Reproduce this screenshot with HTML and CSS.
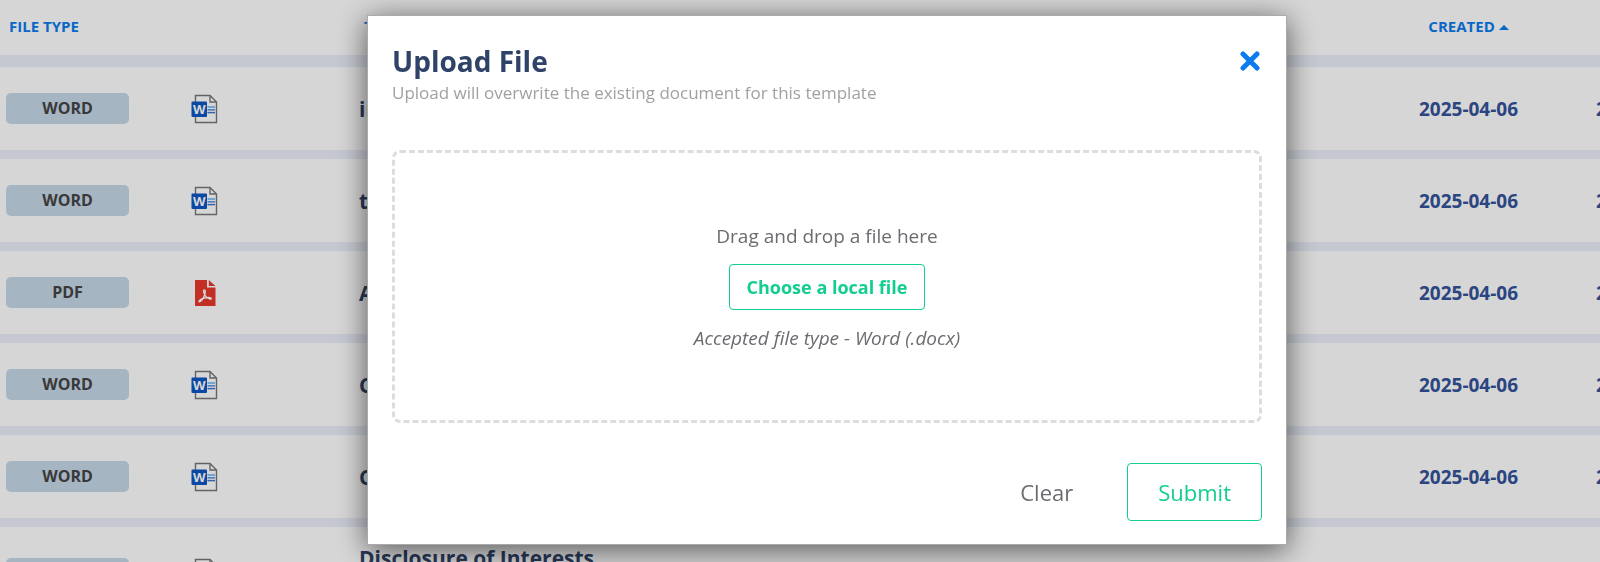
FILE: index.html
```html
<!DOCTYPE html>
<html lang="en">
<head>
    <meta charset="UTF-8">
    <meta name="viewport" content="width=device-width, initial-scale=1.0">
    <title>Upload File</title>
    <link rel="stylesheet" href="styles.css">
</head>
<body>
    <!-- Shared icons -->
    <svg class="icon-defs" aria-hidden="true">
        <symbol id="icon-word" viewBox="0 0 27 30">
            <path d="M4.500 1.500H19L25.500 8V28.500H4.500Z" fill="#fff" stroke="#777" stroke-width="1.4"/>
            <path d="M19 1.500V8H25.500" fill="none" stroke="#777" stroke-width="1.4"/>
            <path d="M16.500 13H24" stroke="#5eb5f5" stroke-width="1.5"/>
            <path d="M16.500 15.800H24" stroke="#4a93dc" stroke-width="1.5"/>
            <path d="M16.500 18.600H24" stroke="#3a78c8" stroke-width="1.5"/>
            <rect x="0.500" y="7.500" width="15.500" height="15.500" rx="1" fill="#0c56c4"/>
            <text x="8.200" y="19.600" text-anchor="middle" class="icon-letter">W</text>
        </symbol>
        <symbol id="icon-pdf" viewBox="0 0 27 30">
            <path d="M4 2H16V9.500H24.500V28H4Z" fill="#e8382c"/>
            <path d="M17.800 2L24.500 8H17.800Z" fill="#e8382c"/>
            <path d="M13 12C14.500 11.500 14.500 14 13.800 16.500C12.500 20 10.500 23.500 8.500 23.800C7.200 23.600 9 21.200 12.500 20.300C16 19.300 20 19 20.300 20.500C20.200 22 16 20.500 14.200 17.500C12.800 15 12.300 12.500 13 12Z" fill="none" stroke="#fff" stroke-width="1.400"/>
        </symbol>
    </svg>

    <div class="table-wrap">
        <table class="template-table">
            <colgroup>
                <col class="col-type">
                <col class="col-icon">
                <col>
                <col class="col-date">
                <col class="col-date">
            </colgroup>
            <thead>
                <tr>
                    <th class="type-head">File Type</th>
                    <th></th>
                    <th class="name-head">Template</th>
                    <th>Created <span class="sort-arrow"></span></th>
                    <th>Updated</th>
                </tr>
            </thead>
            <tbody>
                <tr>
                    <td><span class="badge">WORD</span></td>
                    <td><svg class="file-icon"><use href="#icon-word"/></svg></td>
                    <td class="name">interests</td>
                    <td class="date">2025-04-06</td>
                    <td class="date">2025-04-06</td>
                </tr>
                <tr>
                    <td><span class="badge">WORD</span></td>
                    <td><svg class="file-icon"><use href="#icon-word"/></svg></td>
                    <td class="name">template</td>
                    <td class="date">2025-04-06</td>
                    <td class="date">2025-04-06</td>
                </tr>
                <tr>
                    <td><span class="badge">PDF</span></td>
                    <td><svg class="file-icon"><use href="#icon-pdf"/></svg></td>
                    <td class="name">Agreement</td>
                    <td class="date">2025-04-06</td>
                    <td class="date">2025-04-06</td>
                </tr>
                <tr>
                    <td><span class="badge">WORD</span></td>
                    <td><svg class="file-icon"><use href="#icon-word"/></svg></td>
                    <td class="name">Contract</td>
                    <td class="date">2025-04-06</td>
                    <td class="date">2025-04-06</td>
                </tr>
                <tr>
                    <td><span class="badge">WORD</span></td>
                    <td><svg class="file-icon"><use href="#icon-word"/></svg></td>
                    <td class="name">Certificate</td>
                    <td class="date">2025-04-06</td>
                    <td class="date">2025-04-06</td>
                </tr>
                <tr>
                    <td><span class="badge">WORD</span></td>
                    <td><svg class="file-icon"><use href="#icon-word"/></svg></td>
                    <td class="name">Disclosure of Interests<br>Form</td>
                    <td class="date">2025-04-06</td>
                    <td class="date">2025-04-06</td>
                </tr>
            </tbody>
        </table>
    </div>

    <div class="overlay">
        <div class="modal" role="dialog" aria-modal="true" aria-labelledby="modalTitle">
            <div class="modal-header">
                <div>
                    <h2 id="modalTitle">Upload File</h2>
                    <p class="subtitle">Upload will overwrite the existing document for this template</p>
                </div>
                <button type="button" class="close-button" aria-label="Close">
                    <svg viewBox="0 0 20 20" width="20" height="20"><path d="M3 3L17 17M17 3L3 17" stroke="currentColor" stroke-width="5" stroke-linecap="round"/></svg>
                </button>
            </div>

            <div class="drop-zone">
                <p>Drag and drop a file here</p>
                <button type="button" class="choose-button">Choose a local file</button>
                <p class="accepted">Accepted file type - Word (.docx)</p>
            </div>

            <div class="modal-footer">
                <button type="button" class="clear-button">Clear</button>
                <button type="button" class="submit-button">Submit</button>
            </div>
        </div>
    </div>
</body>
</html>
```

FILE: styles.css
```css
:root {
    --blue: #0b7bee;
    --navy: #2f4369;
    --green: #13ce8f;
    --text-grey: #6b6c70;
    --divider: #ebeff9;
}

* {
    box-sizing: border-box;
}

body {
    margin: 0;
    height: 100vh;
    overflow: hidden;
    font-family: 'Open Sans', sans-serif;
    background: #fff;
}

button {
    font-family: inherit;
    background: none;
    border: none;
    padding: 0;
    cursor: pointer;
}

.icon-defs {
    display: none;
}

.icon-letter {
    font-family: 'Open Sans', sans-serif;
    font-size: 13px;
    font-weight: 700;
    fill: #fff;
}

/* Template list */
.table-wrap {
    height: 100%;
    overflow: hidden;
}

.template-table {
    width: calc(100% + 134px); /* last column runs past the edge */
    table-layout: fixed;
    border-spacing: 0;
    text-align: center;
}

.col-type {
    width: 135px;
}

.col-icon {
    width: 138px;
}

.col-date {
    width: 177px;
}

.template-table th {
    height: 67px;
    padding: 0 0 3px;
    border-bottom: 12px solid var(--divider);
    color: var(--blue);
    font-size: 15px;
    font-weight: 700;
    text-transform: uppercase;
}

.template-table td {
    height: 92px;
    padding: 0 6px;
    border-bottom: 9px solid var(--divider);
}

.template-table .type-head {
    padding-left: 9px;
    text-align: left;
}

.template-table .name-head {
    padding-left: 91px;
    text-align: left;
}

.template-table .name {
    padding: 16px 0 16px 86px;
    color: var(--navy);
    font-size: 21px;
    line-height: 30px;
    font-weight: 700;
    text-align: left;
}

.template-table .date {
    color: #34539a;
    font-size: 19px;
    font-weight: 700;
}

.sort-arrow {
    display: inline-block;
    border: 5px solid transparent;
    border-top: none;
    border-bottom-color: var(--blue);
    vertical-align: middle;
}

.badge {
    display: block;
    border-radius: 5px;
    background: #c5d8e8;
    color: #444;
    font-size: 16px;
    line-height: 31px;
    font-weight: 700;
}

.file-icon {
    display: block;
    width: 27px;
    height: 30px;
    margin: 0 auto;
}

/* Modal */
.overlay {
    position: fixed;
    inset: 0;
    padding: 15px 313px 0 367px;
    background: rgba(0, 0, 0, 0.16);
}

.modal {
    padding: 25px 24px 23px;
    border: 1px solid #aaa;
    background: #fff;
    box-shadow: 0 5px 28px rgba(0, 0, 0, 0.6);
}

.modal-header {
    display: flex;
    justify-content: space-between;
    align-items: flex-start;
    margin-bottom: 46px;
}

h2 {
    margin: 0;
    color: var(--navy);
    font-size: 28px;
    line-height: 41px;
    font-weight: 700;
}

.subtitle {
    margin: 0;
    color: #a0a1a3;
    font-size: 17px;
    line-height: 22px;
    font-weight: 500;
}

.close-button {
    display: flex;
    padding: 10px 2px;
    color: var(--blue);
}

.drop-zone {
    display: flex;
    flex-direction: column;
    align-items: center;
    justify-content: center;
    gap: 14px;
    min-height: 273px;
    border: 3px dashed #ddd;
    border-radius: 8px;
    color: var(--text-grey);
    font-size: 19px;
    line-height: 28px;
}

.drop-zone p {
    margin: 0;
}

.accepted {
    font-style: italic;
}

.choose-button {
    height: 46px;
    padding: 0 17px;
    border: 1px solid var(--green);
    border-radius: 4px;
    color: var(--green);
    font-size: 18px;
    font-weight: 700;
}

.modal-footer {
    display: flex;
    justify-content: flex-end;
    gap: 54px;
    margin-top: 40px;
}

.clear-button,
.submit-button {
    height: 58px;
    color: var(--text-grey);
    font-size: 22px;
}

.submit-button {
    padding: 0 30px;
    border: 1px solid var(--green);
    border-radius: 4px;
    color: var(--green);
}
```
